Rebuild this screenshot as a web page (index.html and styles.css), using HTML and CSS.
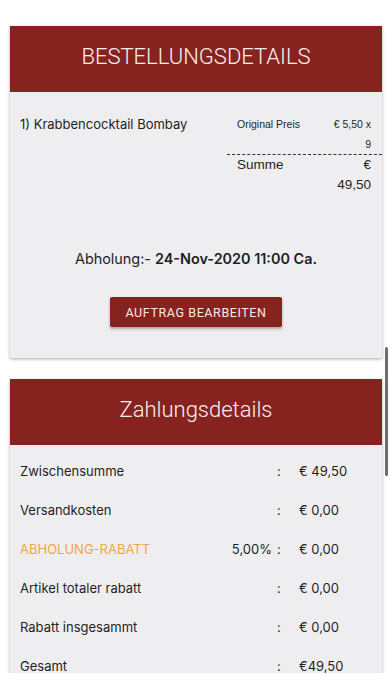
FILE: index.html
```html
<!DOCTYPE html>
<html lang="de">
<head>
    <meta charset="UTF-8">
    <meta name="viewport" content="width=device-width, initial-scale=1.0">
    <link rel="stylesheet" href="styles.css">
    <title>Bestellungsdetails</title>
</head>
<body>

<div class="card">
    <div class="card-header">BESTELLUNGSDETAILS</div>
    <div class="card-body order-body">
        <div class="order-item">
            <div class="item-name">1) Krabbencocktail Bombay</div>
            <div class="item-prices">
                <div class="price-row price-row-small">
                    <div class="price-label">Original Preis</div>
                    <div class="price-value">€ 5,50 x 9</div>
                </div>
                <div class="price-row price-row-sum">
                    <div class="price-label">Summe</div>
                    <div class="price-value">€ 49,50</div>
                </div>
            </div>
        </div>

        <div class="pickup">Abholung:- <b>24-Nov-2020 11:00 Ca.</b></div>

        <div class="button-wrap">
            <button class="btn-edit">AUFTRAG BEARBEITEN</button>
        </div>
    </div>
</div>

<div class="card">
    <div class="card-header card-header-title">Zahlungsdetails</div>
    <div class="card-body pay-body">
        <div class="pay-row">
            <div class="pay-label">Zwischensumme</div>
            <div class="pay-rate"></div>
            <div class="pay-colon">:</div>
            <div class="pay-value">€ 49,50</div>
        </div>
        <div class="pay-row">
            <div class="pay-label">Versandkosten</div>
            <div class="pay-rate"></div>
            <div class="pay-colon">:</div>
            <div class="pay-value">€ 0,00</div>
        </div>
        <div class="pay-row">
            <div class="pay-label pay-label-orange">ABHOLUNG-RABATT</div>
            <div class="pay-rate">5,00%</div>
            <div class="pay-colon">:</div>
            <div class="pay-value">€ 0,00</div>
        </div>
        <div class="pay-row">
            <div class="pay-label">Artikel totaler rabatt</div>
            <div class="pay-rate"></div>
            <div class="pay-colon">:</div>
            <div class="pay-value">€ 0,00</div>
        </div>
        <div class="pay-row">
            <div class="pay-label">Rabatt insgesammt</div>
            <div class="pay-rate"></div>
            <div class="pay-colon">:</div>
            <div class="pay-value">€ 0,00</div>
        </div>
        <div class="pay-row">
            <div class="pay-label">Gesamt</div>
            <div class="pay-rate"></div>
            <div class="pay-colon">:</div>
            <div class="pay-value">€49,50</div>
        </div>
    </div>
</div>

<div class="bottom-fade"></div>
<div class="scrollbar"></div>

</body>
</html>
```

FILE: styles.css
```css
html, body {
    margin: 0;
    padding: 0;
    background-color: #fff;
    overflow: hidden;
    height: 696px;
}

body {
    font-family: Inter, "Liberation Sans", Arial, sans-serif;
    color: #1f1f1f;
    padding-top: 26px;
}

.card {
    margin: 0 10px 21px 10px;
    background-color: #eeeef0;
    box-shadow: 0 1px 3px rgba(0, 0, 0, 0.35);
}

.card-header {
    background-color: #86231f;
    color: #fbeeee;
    height: 60px;
    padding-bottom: 6px;
    display: flex;
    align-items: center;
    justify-content: center;
    font-family: Roboto, "Liberation Sans", sans-serif;
    font-weight: 300;
    font-size: 22px;
}

/* Bestellung */

.order-body {
    padding: 24px 0 31px 0;
}

.order-item {
    display: flex;
    align-items: flex-start;
}

.item-name {
    flex: 1;
    padding-left: 10px;
    font-size: 13px;
    line-height: 16px;
}

.item-prices {
    width: 155px;
    font-family: "Liberation Sans", Arial, sans-serif;
}

.price-row {
    display: flex;
    align-items: flex-start;
    padding: 0 11px 0 10px;
}

.price-label {
    flex: 1;
}

.price-value {
    width: 42px;
    text-align: right;
}

.price-row-small {
    font-size: 10.5px;
    line-height: 20px;
    margin-top: -2px;
    border-bottom: 1px dashed #333;
}

.price-row-sum {
    font-size: 13.5px;
    line-height: 20px;
}

.pickup {
    margin-top: 55px;
    text-align: center;
    font-size: 14.4px;
    line-height: 18px;
}

.pickup b {
    font-weight: 600;
}

.button-wrap {
    display: flex;
    justify-content: center;
    margin-top: 29px;
}

.btn-edit {
    background-color: #86231f;
    color: #f7e9e9;
    border: none;
    border-radius: 2px;
    width: 172px;
    height: 30px;
    font-family: Roboto, "Liberation Sans", sans-serif;
    font-size: 12.5px;
    font-weight: 400;
    letter-spacing: 0.6px;
    box-shadow: 0 2px 3px rgba(0, 0, 0, 0.3);
}

/* Zahlung */

.pay-body {
    padding: 6px 0 20px 0;
}

.pay-row {
    display: grid;
    grid-template-columns: 1fr auto 23px 83px;
    align-items: center;
    height: 39px;
    font-size: 13px;
}

.pay-label {
    padding-left: 10px;
}

.pay-label-orange {
    color: #f2a548;
}

.pay-rate {
    padding-right: 4px;
}

.pay-colon {
    padding-left: 1px;
}

.bottom-fade {
    position: fixed;
    left: 0;
    right: 0;
    top: 673px;
    bottom: 0;
    background-color: #fff;
}

.scrollbar {
    position: fixed;
    left: 385px;
    top: 347px;
    width: 3px;
    height: 129px;
    border-radius: 2px;
    background-color: #6e6e6e;
}
```
